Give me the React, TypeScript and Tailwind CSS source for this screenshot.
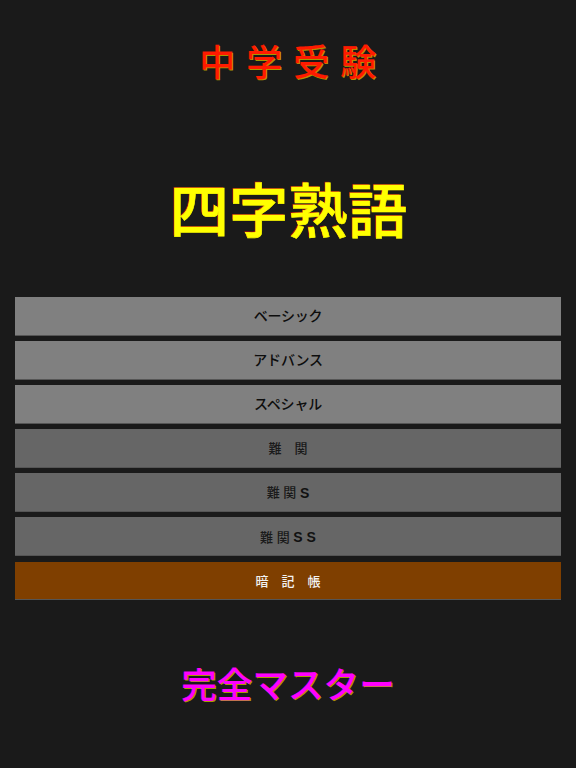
const font = "font-['Liberation_Sans','Noto_Sans_CJK_JP',sans-serif]";

const menu = [
  { id: "basic", kanji: "ベーシック", latin: "", bg: "bg-[#808080]", text: "text-[#0d0d0d] text-[14px] tracking-[-0.2px]" },
  { id: "advance", kanji: "アドバンス", latin: "", bg: "bg-[#808080]", text: "text-[#0d0d0d] text-[14px] tracking-[-0.2px]" },
  { id: "special", kanji: "スペシャル", latin: "", bg: "bg-[#808080]", text: "text-[#0d0d0d] text-[14px] tracking-[-0.2px]" },
  { id: "hard", kanji: "難　関", latin: "", bg: "bg-[#666666]", text: "text-[#1a1a1a] text-[13px]" },
  { id: "hard-s", kanji: "難 関 ", latin: "S", bg: "bg-[#666666]", text: "text-[#1a1a1a] text-[13px]" },
  { id: "hard-ss", kanji: "難 関 ", latin: "S S", bg: "bg-[#666666]", text: "text-[#1a1a1a] text-[13px]" },
  { id: "memo", kanji: "暗　記　帳", latin: "", bg: "bg-[#7f3f00]", text: "text-[#f2f2f2] text-[13px]" },
];

export default function App() {
  return (
    <div className={`${font} w-[576px] h-[768px] bg-[#1a1a1a] flex flex-col items-center overflow-hidden`}>
      <div className="h-[124px] w-full flex items-center justify-center pt-[3px]">
        <h1 className="text-[36px] leading-none tracking-[0.5px] font-medium text-[#ff1a00] [-webkit-text-stroke:0.2px_#ff1a00] [text-shadow:1px_1px_0_#a89800]">
          中 学 受 験
        </h1>
      </div>
      <div className="h-[173px] w-full flex items-center justify-center pt-[5px] pl-[1px]">
        <h2 className="text-[59.5px] leading-none font-medium text-[#ffff00] [-webkit-text-stroke:0.6px_#ffff00] [text-shadow:-1px_-1px_0_#a01010]">
          四字熟語
        </h2>
      </div>
      <div className="w-full px-[15px] flex flex-col gap-[5.5px]">
        {menu.map((item) => (
          <button
            key={item.id}
            className={`h-[38.6px] w-full flex items-center justify-center whitespace-pre border-b border-[#555] pt-[2px] font-medium ${item.bg} ${item.text}`}
          >
            {item.kanji}
            {item.latin && <span className="font-bold text-[14px] text-[#111]">{item.latin}</span>}
          </button>
        ))}
      </div>
      <div className="flex-1 w-full flex items-center justify-center pt-[6px]">
        <h2 className="text-[35.6px] leading-none font-medium text-[#ff00ff] [-webkit-text-stroke:0.2px_#ff00ff] [text-shadow:1px_1px_0_#a89800]">
          完全マスター
        </h2>
      </div>
    </div>
  );
}
